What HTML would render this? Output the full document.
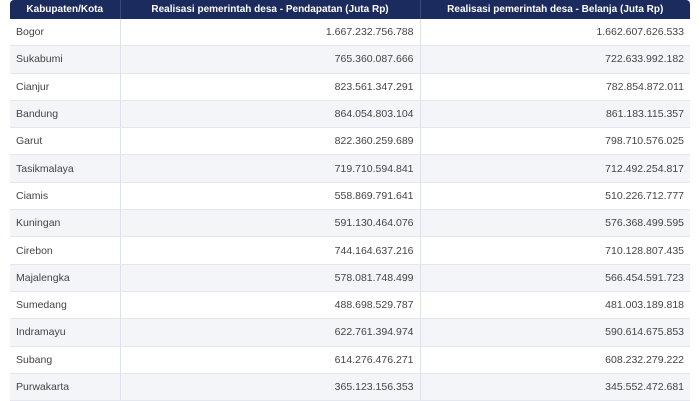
<!DOCTYPE html><html><head><style>
body{margin:0;width:700px;height:400px;overflow:hidden;background:#fff;font-family:"Liberation Sans",sans-serif;}
table{position:absolute;left:10px;top:0;width:680px;border-collapse:collapse;font-size:10.5px;color:#444;}
th{background:#1b2b5e;color:#fff;font-weight:bold;height:19px;padding:0;text-align:center;font-size:10px;border-right:1px solid #3a4a78}
th:first-child{border-top-left-radius:4px}th:last-child{border-top-right-radius:4px;border-right:none}
td{height:26.3px;padding:0 6px;border-bottom:1px solid #e4e8ee;border-right:1px solid #dde2ea}
td:last-child{border-right:none}
td+td{text-align:right}
tr:nth-child(odd) td{background:#f3f5f9}
</style></head><body>
<table>
<colgroup><col style="width:110px"><col style="width:300px"><col style="width:270px"></colgroup>
<tr><th>Kabupaten/Kota</th><th>Realisasi pemerintah desa - Pendapatan (Juta Rp)</th><th>Realisasi pemerintah desa - Belanja (Juta Rp)</th></tr>
<tr><td>Bogor</td><td>1.667.232.756.788</td><td>1.662.607.626.533</td></tr>
<tr><td>Sukabumi</td><td>765.360.087.666</td><td>722.633.992.182</td></tr>
<tr><td>Cianjur</td><td>823.561.347.291</td><td>782.854.872.011</td></tr>
<tr><td>Bandung</td><td>864.054.803.104</td><td>861.183.115.357</td></tr>
<tr><td>Garut</td><td>822.360.259.689</td><td>798.710.576.025</td></tr>
<tr><td>Tasikmalaya</td><td>719.710.594.841</td><td>712.492.254.817</td></tr>
<tr><td>Ciamis</td><td>558.869.791.641</td><td>510.226.712.777</td></tr>
<tr><td>Kuningan</td><td>591.130.464.076</td><td>576.368.499.595</td></tr>
<tr><td>Cirebon</td><td>744.164.637.216</td><td>710.128.807.435</td></tr>
<tr><td>Majalengka</td><td>578.081.748.499</td><td>566.454.591.723</td></tr>
<tr><td>Sumedang</td><td>488.698.529.787</td><td>481.003.189.818</td></tr>
<tr><td>Indramayu</td><td>622.761.394.974</td><td>590.614.675.853</td></tr>
<tr><td>Subang</td><td>614.276.476.271</td><td>608.232.279.222</td></tr>
<tr><td>Purwakarta</td><td>365.123.156.353</td><td>345.552.472.681</td></tr>
</table></body></html>
